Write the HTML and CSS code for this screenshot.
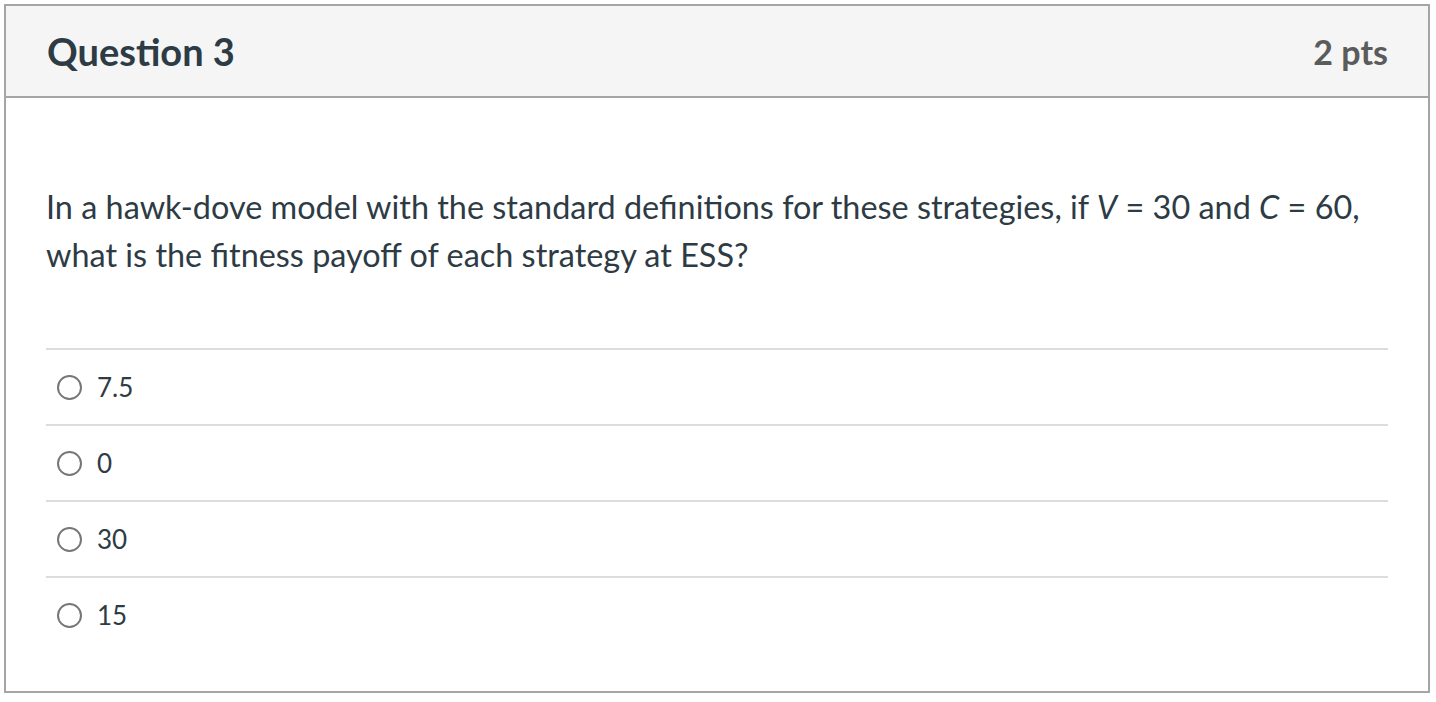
FILE: index.html
```html
<!DOCTYPE html>
<html>
<head>
<meta charset="utf-8">
<link rel="stylesheet" href="styles.css">
</head>
<body>
<div class="card">
  <div class="header">
    <div class="title">Question 3</div>
    <div class="pts">2 pts</div>
  </div>
  <div class="content">
    <p class="question">In a hawk-dove model with the standard definitions for these strategies, if <i>V</i> = 30 and <i>C</i> = 60, what is the fitness payoff of each strategy at ESS?</p>
    <div class="answers">
      <label class="answer"><span class="radio"></span><span class="atext">7.5</span></label>
      <label class="answer"><span class="radio"></span><span class="atext">0</span></label>
      <label class="answer"><span class="radio"></span><span class="atext">30</span></label>
      <label class="answer"><span class="radio"></span><span class="atext">15</span></label>
    </div>
  </div>
</div>
</body>
</html>
```
FILE: styles.css
```css
html, body {
  margin: 0;
  padding: 0;
  background: #fff;
}
body {
  font-family: Lato, "Open Sans", sans-serif;
  color: #2d3b45;
}
.card {
  margin: 4px 0 0 4px;
  border: 2px solid #a5a5a5;
  box-sizing: border-box;
  width: 1426px;
  height: 689px;
}
.header {
  height: 90px;
  background: #f5f5f5;
  border-bottom: 2px solid #a5a5a5;
  display: flex;
  align-items: center;
  justify-content: space-between;
  padding: 0 40px 0 41px;
}
.title {
  font-size: 38px;
  font-weight: 700;
  color: #2d3b45;
}
.pts {
  font-size: 34px;
  font-weight: 700;
  color: #5b5b5b;
}
.content {
  padding: 85px 40px 0 40px;
}
.question {
  margin: 0;
  font-size: 32.4px;
  line-height: 48px;
}
.answers {
  margin-top: 69px;
}
.answer {
  display: flex;
  align-items: center;
  height: 74px;
  border-top: 2px solid #dcdcdc;
  padding-left: 11px;
}
.radio {
  width: 25px;
  height: 25px;
  box-sizing: border-box;
  border: 2px solid #777;
  border-radius: 50%;
  margin-right: 15px;
  flex: none;
}
.atext {
  font-size: 26px;
}
```
